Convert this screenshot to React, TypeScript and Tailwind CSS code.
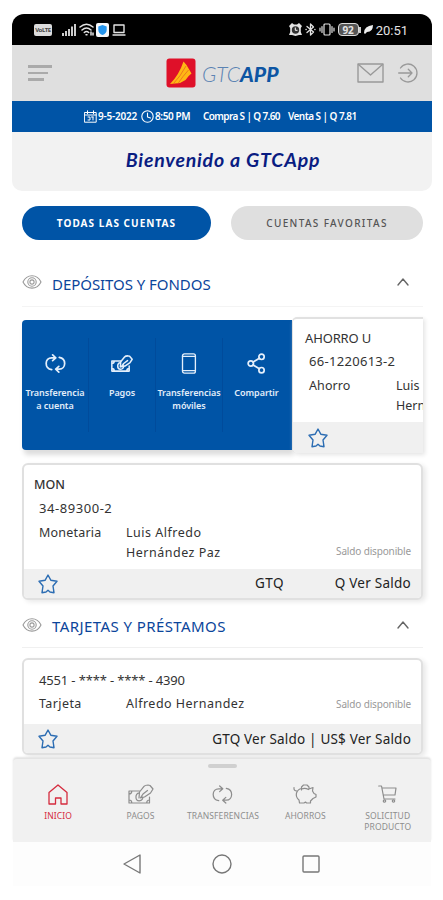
import React from "react";

type IconProps = { className?: string };

const stroke = {
  fill: "none",
  stroke: "currentColor",
  strokeLinecap: "round" as const,
  strokeLinejoin: "round" as const,
};

function Star() {
  return (
    <svg className="h-[20px] w-[20px] text-[#2c6db3]" viewBox="0 0 20 20" {...stroke} strokeWidth="1.4">
      <path d="M10 1 L12.8 6.2 L19 7.3 L15 12 L16 18.7 L12 18 L10 16.2 L8 18 L4 18.7 L5 12 L1 7.3 L7.2 6.2 Z" />
    </svg>
  );
}

function Eye() {
  return (
    <svg className="h-[16px] w-[20px] shrink-0 text-[#9a9a9a]" viewBox="0 0 20 16" {...stroke} strokeWidth="1.1">
      <path d="M1 8 C5 -.4 15 -.4 19 8 C15 16.2 5 16.2 1 8Z" />
      <circle cx="10" cy="8" r="4.2" />
      <circle cx="10" cy="8" r="2.1" />
    </svg>
  );
}

function Transfer({ className }: IconProps) {
  return (
    <svg className={className} viewBox="0 0 22 20" {...stroke}>
      <path d="M7 16.5 C-1 15-.5 4 7 4 H11 M8 1 L11.3 4 L8 7 M15 3.5 C23 5 22 16 15 16 H11.5 M14.5 13 L11.2 16 L14.5 19" />
    </svg>
  );
}

function Money({ className }: IconProps) {
  return (
    <svg className={className} viewBox="0 0 26 20" {...stroke}>
      <path d="M11.5 7 H1 V19 H21.5 V13 M1 10 Q3.8 10 3.8 7 M1 16 Q3.8 16 3.8 19 M18.7 19 Q18.7 16 21.5 16" />
      <path d="M11 9.2 C7 9 6.8 16.8 11.2 16.8 C14 16.8 15.2 14.5 14.7 13" />
      <path d="M11 14 L11.5 8 L16 2.3 Q17 1 20 1 L22 1.5 L25 5 L22.5 9 L16.5 13 L12.5 13.8 L15 10 L19.5 6.5" />
    </svg>
  );
}

function Phone({ className }: IconProps) {
  return (
    <svg className={className} viewBox="0 0 16 22" {...stroke}>
      <rect x="1.2" y="1" width="13.5" height="20" rx="2" />
      <path d="M1.2 3.6 H14.7 M1.2 18.4 H14.7" />
    </svg>
  );
}

function Share({ className }: IconProps) {
  return (
    <svg className={className} viewBox="0 0 20 22" {...stroke}>
      <circle cx="4" cy="11" r="2.8" />
      <circle cx="15.3" cy="4" r="2.8" />
      <circle cx="15.3" cy="18" r="2.8" />
      <path d="M6.5 9.5 L13 5.5 M6.5 12.5 L13 16.5" />
    </svg>
  );
}

function StatusBar() {
  return (
    <div className="flex h-[31px] items-center justify-between rounded-t-[12px] bg-black pl-[22px] pr-[24px] text-[#e3e3e3]">
      <div className="flex items-center">
        <div className="mr-[10px] flex h-[12px] w-[18px] items-center justify-center overflow-hidden rounded-[2px] bg-[#dcdcdc] text-[6px] font-bold leading-none tracking-[-0.4px] text-[#444]">VoLTE</div>
        <svg className="mr-[3px] h-[12px] w-[14px]" viewBox="0 0 14 12" fill="#ccc">
          <path d="M0 9h2v3H0zM3 7h2v5H3zM6 5h2v7H6zM9 2.5h2V12H9zM12 0h2v12h-2z" />
        </svg>
        <svg className="mr-[2px] h-[13px] w-[15px]" viewBox="0 0 15 13" {...stroke} strokeWidth="1.5">
          <path d="M1 4 Q7.5-1.5 14 4 M3 7 Q7.5 3 12 7 M5.3 9.5 Q7.5 7.5 9.7 9.5 M7 11.7h1 M12 9v3M14 10v2" />
        </svg>
        <svg className="mr-[3px] h-[14px] w-[13px]" viewBox="0 0 13 14">
          <rect width="13" height="14" rx="2" fill="#f6f8fa" />
          <path d="M6.5 2 L10.7 3.5 V7 Q10.5 10.5 6.5 12 Q2.5 10.5 2.3 7 V3.5Z" fill="#2495ed" />
        </svg>
        <svg className="h-[12px] w-[14px]" viewBox="0 0 14 12" {...stroke} strokeWidth="1.4">
          <rect x="2" y="1" width="10" height="7.5" /><path d="M1 11 H13" />
        </svg>
      </div>
      <div className="flex items-center">
        <svg className="mr-[3px] h-[13px] w-[13px]" viewBox="0 0 13 13">
          <path d="M0 3 L3 0 L5 1.5 H8 L10 0 L13 3 L11.8 5 V9 L13 12 H10 L6.5 13 L3 12 H0 L1.2 9 V5Z" fill="#e3e3e3" />
          <circle cx="6.5" cy="7" r="3.7" fill="#333" /><path d="M6.3 4.5V7.3H8.5" stroke="#fff" fill="none" />
        </svg>
        <svg className="mr-[3px] h-[13px] w-[11px]" viewBox="0 0 11 13" {...stroke} strokeWidth="1.3">
          <path d="M2 3.5 L8.5 9 L5.5 12 V1 L8.5 4 L2 9.5 M1 6.5h.2M9.8 6.5h.2" />
        </svg>
        <svg className="mr-[3px] h-[13px] w-[16px]" viewBox="0 0 16 13" {...stroke} strokeWidth="1.2">
          <rect x="5" y="1" width="6" height="11" rx="1" /><path d="M3 3.5v6M1 5v3M13 3.5v6M15 5v3" />
        </svg>
        <div className="flex h-[13px] w-[21px] items-center justify-center rounded-[4px] border border-[#ddd] bg-[#555] text-[10px] font-bold leading-none">92</div>
        <div className="mr-[3px] h-[6px] w-[2px] bg-[#ccc]" />
        <svg className="mr-[3px] h-[9px] w-[9px]" viewBox="0 0 9 9"><path d="M0 8 Q0 1 9 0 Q9 7 3 7 L1 9Z" fill="#eee" /></svg>
        <span className="pt-[2px] font-['Roboto'] text-[13px] leading-none">20:51</span>
      </div>
    </div>
  );
}

function Header() {
  return (
    <header className="flex h-[56px] items-center bg-[#dfdfdf] pl-[16px] pr-[14px]">
      <div className="flex w-[24px] flex-col gap-[4px]">
        <div className="h-[2.5px] w-[24px] bg-[#aaa]" />
        <div className="h-[2.5px] w-[20px] bg-[#aaa]" />
        <div className="h-[2.5px] w-[16px] bg-[#aaa]" />
      </div>
      <svg className="ml-[114px] h-[30px] w-[30px]" viewBox="0 0 30 30">
        <rect x=".5" y=".5" width="29" height="29" rx="3" fill="#df1029" />
        <path d="M17.5 3.5 L20.5 7 L25.5 15.5 Q22 18 19.5 22 L14 25 L4 26 Q13 17 17.5 3.5Z" fill="#ffb814" />
        <path d="M20 8 Q14 19 7.5 25.5 M22.5 12 Q17 18 12 25.5" stroke="#e96a20" strokeWidth=".8" fill="none" />
      </svg>
      <div className="ml-[6px] w-[82px] whitespace-nowrap font-['Lato'] text-[21px] italic leading-none text-[#0d55a3]">
        <span className="font-light text-[#5b83b3]">GTC</span><span className="font-black">APP</span>
      </div>
      <div className="flex-1" />
      <svg className="h-[20px] w-[27px] text-[#999]" viewBox="0 0 27 20" {...stroke} strokeWidth="1.4">
        <rect x="1" y="1" width="25" height="18" /><path d="M1.5 1.5 L13.5 12 L25.5 1.5" />
      </svg>
      <svg className="ml-[14px] h-[20px] w-[20px] text-[#999]" viewBox="0 0 20 20" {...stroke} strokeWidth="1.3">
        <path d="M2.5 5 A9 9 0 1 1 2.5 15 M0.7 10 H14 M10.3 6.2 L14 10 L10.3 13.8" />
      </svg>
    </header>
  );
}

function RateBar() {
  return (
    <div className="flex h-[31px] items-center whitespace-nowrap bg-[#0054a6] pl-[72px] text-[10px] font-semibold text-white">
      <svg className="h-[13px] w-[13px] shrink-0" viewBox="0 0 13 13" {...stroke} strokeWidth="1">
        <path d="M.8 2.5h11.4v9.7H.8zM.8 5h11.4M3.5.8v3M9.5.8v3M4 7h2v3H4M9 7v3M7.5 7H9" />
      </svg>
      <span className="ml-[1px] w-[42px] shrink-0 tracking-[-0.2px]">9-5-2022</span>
      <svg className="ml-[1px] h-[13px] w-[13px] shrink-0" viewBox="0 0 13 13" {...stroke} strokeWidth="1.1">
        <circle cx="6.5" cy="6.5" r="5.7" /><path d="M6.5 3v4l3 1" />
      </svg>
      <span className="ml-[1px] w-[48px] shrink-0 tracking-[-0.4px]">8:50 PM</span>
      <span className="w-[85px] shrink-0 tracking-[-0.63px]">Compra S | Q 7.60</span>
      <span className="tracking-[-0.55px]">Venta S | Q 7.81</span>
    </div>
  );
}

function SectionTitle({ children }: { children: React.ReactNode }) {
  return (
    <div className="flex h-full items-center">
      <Eye />
      <h2 className="ml-[10px] flex-1 whitespace-nowrap pt-[4px] leading-none text-[#0b459b]">{children}</h2>
      <svg className="mr-[14px] h-[8px] w-[12px] text-[#666]" viewBox="0 0 12 8" {...stroke} strokeWidth="1.4"><path d="M1 7 L6 1 L11 7" /></svg>
    </div>
  );
}

function Action({ icon, children, last }: { icon: React.ReactNode; children: React.ReactNode; last?: boolean }) {
  return (
    <div className={`flex h-[94px] w-[67px] flex-col items-center ${last ? "" : "border-r border-[#004b9b]"}`}>
      <div className="flex h-[50px] items-center justify-center">{icon}</div>
      <div className="mt-[-2px] whitespace-nowrap text-center text-[9px] font-semibold leading-[13px] tracking-[-0.05px] text-[#e2edf9]">{children}</div>
    </div>
  );
}

function DepositsRow() {
  return (
    <div className="flex h-[136px]">
      <div className="mt-[3px] flex h-[130px] w-[270px] shrink-0 items-center rounded-l-[4px] bg-[#0054a6] text-[#e4effb] shadow-[2px_5px_5px_#ddd]">
        <Action icon={<Transfer className="h-[19px] w-[21px] stroke-[1.8]" />}>Transferencia<br />a cuenta</Action>
        <Action icon={<Money className="h-[17px] w-[22px] stroke-[1.8]" />}>Pagos</Action>
        <Action icon={<Phone className="h-[21px] w-[16px] stroke-[1.4]" />}>Transferencias<br />móviles</Action>
        <Action last icon={<Share className="h-[21px] w-[19px] stroke-[1.8]" />}>Compartir</Action>
      </div>
      <article className="z-10 flex h-[136px] w-[131px] flex-col overflow-hidden rounded-l-[5px] border-t-2 border-l border-[#e1e1e1] bg-white shadow-[2px_2px_4px_#e5e5e5]">
        <div className="h-[103px] whitespace-nowrap pl-[12px] pt-[9px] text-[13px] text-[#333]">
          <div className="h-[23px] leading-[20px] tracking-[-0.15px]">AHORRO U</div>
          <div className="h-[25px] pl-[4px] leading-[20px] tracking-[0.3px]">66-1220613-2</div>
          <div className="flex pl-[4px] text-[12.5px] leading-[20px]">
            <span className="w-[87px] shrink-0 tracking-[0.1px]">Ahorro</span><span>Luis<br />Hernández</span>
          </div>
        </div>
        <div className="flex h-[31px] shrink-0 items-center bg-[#f0f0f0] pl-[15px]"><Star /></div>
      </article>
    </div>
  );
}

function Balance() {
  return <span className="whitespace-nowrap text-[10px] leading-none tracking-[-0.15px] text-[#999]">Saldo disponible</span>;
}

function NavItem({ icon, children, red }: { icon: React.ReactNode; children: React.ReactNode; red?: boolean }) {
  return (
    <div className={`flex w-[82.4px] flex-col items-center ${red ? "text-[#d52b3e]" : "text-[#8d8d8d]"}`}>
      <div className="flex h-[24px] items-center">{icon}</div>
      <div className="mt-[4px] whitespace-nowrap text-center text-[8.5px] leading-[11px] tracking-[0.1px]">{children}</div>
    </div>
  );
}

export default function App() {
  return (
    <div className="h-[900px] w-[443px] overflow-hidden bg-white pl-[12px] pt-[14px] font-['Noto_Sans',sans-serif]">
      <main className="w-[420px]">
        <StatusBar />
        <Header />
        <RateBar />
        <div className="flex h-[59px] items-center justify-center rounded-b-[10px] bg-[#f2f2f2] pb-[3px] pl-[2px] font-['Lato'] text-[19.5px] font-bold italic tracking-[0.8px] text-[#0a1d82]">Bienvenido a GTCApp</div>

        <div className="mt-[15px] flex h-[34px] gap-[20px] pl-[10px]">
          <button className="w-[189px] rounded-full bg-[#0054a6] text-[10px] font-bold tracking-[1.05px] text-white">TODAS LAS CUENTAS</button>
          <button className="w-[192px] rounded-full bg-[#dfdfdf] text-[10px] font-medium tracking-[1.35px] text-[#555]">CUENTAS FAVORITAS</button>
        </div>

        <div className="ml-[10px] w-[401px]">
          <div className="h-[67px] border-b border-[#f4f4f4] pt-[18px] text-[15px] tracking-[-0.05px]"><SectionTitle>DEPÓSITOS Y FONDOS</SectionTitle></div>
          <div className="mt-[10px]"><DepositsRow /></div>

          <article className="mt-[10px] flex h-[137px] flex-col overflow-hidden rounded-[6px] border-2 border-[#e0e0e0] bg-white shadow-[3px_2px_5px_#e9e9e9]">
            <div className="h-[104px] pl-[10px] pt-[10px] text-[#333]">
              <div className="h-[23px] text-[12.5px] font-medium leading-[20px]">MON</div>
              <div className="h-[25px] pl-[5px] text-[13px] leading-[20px] tracking-[0.55px]">34-89300-2</div>
              <div className="flex pl-[5px] text-[12.5px] leading-[20px] tracking-[0.2px]"><span className="w-[87px]">Monetaria</span><span className="flex-1 tracking-[0.5px]">Luis Alfredo<br />Hernández Paz</span><span className="flex items-end pb-[7px] pr-[10px]"><Balance /></span></div>
            </div>
            <div className="flex h-[29px] items-center bg-[#f0f0f0] pl-[14px] pr-[10px] text-[13.5px] tracking-[0.25px] text-[#222]">
              <Star /><span className="ml-[197px] flex-1 tracking-[0.5px]">GTQ</span><span>Q Ver Saldo</span>
            </div>
          </article>

          <div className="h-[48px] border-b border-[#f0f0f0] pt-[2px] text-[15px] tracking-[0.42px]"><SectionTitle>TARJETAS Y PRÉSTAMOS</SectionTitle></div>
          <article className="mt-[10px] flex h-[97px] flex-col overflow-hidden rounded-[6px] border-2 border-[#e0e0e0] bg-white shadow-[3px_2px_5px_#e9e9e9]">
            <div className="h-[64px] pl-[15px] pr-[10px] pt-[10px] text-[#333]">
              <div className="h-[24px] text-[13px] leading-[20px] tracking-[-0.15px]">4551 - **** - **** - 4390</div>
              <div className="flex items-center text-[12.5px] leading-[20px] tracking-[0.4px]"><span className="w-[87px]">Tarjeta</span><span className="flex-1 tracking-[0.48px]">Alfredo Hernandez</span><Balance /></div>
            </div>
            <div className="flex h-[29px] items-center justify-between bg-[#f0f0f0] pl-[14px] pr-[10px] pt-[1px] text-[13.5px] tracking-[0.2px] text-[#222]"><Star /><span>GTQ Ver Saldo | US$ Ver Saldo</span></div>
          </article>
        </div>

        <nav className="ml-[1px] mt-[4px] h-[83px] w-[418px] rounded-t-[4px] bg-[#f1f1f1] pt-[5px] shadow-[0_-2px_2px_#e3e3e3]">
          <div className="mx-auto h-[4px] w-[29px] rounded-full bg-[#d0d0d0]" />
          <div className="mt-[14px] flex pl-[4px]">
            <NavItem red icon={<svg className="h-[21px] w-[20px]" viewBox="0 0 20 21" {...stroke} strokeWidth="1.3"><path d="M1 8.5 L10 1 L19 8.5 V20 H13 V14 H7.5 V20 H1Z" /></svg>}>INICIO</NavItem>
            <NavItem icon={<Money className="h-[20px] w-[26px] stroke-[1.2]" />}>PAGOS</NavItem>
            <NavItem icon={<Transfer className="h-[19px] w-[21px] stroke-[1.3]" />}>TRANSFERENCIAS</NavItem>
            <NavItem icon={<svg className="h-[20px] w-[24px]" viewBox="0 0 24 20" {...stroke} strokeWidth="1.2"><path d="M1 3.5 Q.5 7 4 7 M3.5 9 Q5 5 8.5 4.5 M8.5 6 V3 L10.5 1 H14 L16 3 V5 L20 3.5 L19.5 7 L21 9.5 L23 10.5 V13 L20 14.5 L17.5 17 V19 H13.5 L12.5 18 L11 19 H6.5 L6 16 Q2.5 13 3.5 9 M8.5 5 Q12 3.5 15.5 5.5" /></svg>}>AHORROS</NavItem>
            <NavItem icon={<svg className="h-[18px] w-[19px]" viewBox="0 0 19 18" {...stroke} strokeWidth="1.2"><path d="M0.7 1 H3.5 L6 14 H17 M4 3 H18 L17 10 H5.5" /><circle cx="6.5" cy="16" r="1.2" /><circle cx="15.5" cy="16" r="1.2" /></svg>}>SOLICITUD<br />PRODUCTO</NavItem>
          </div>
        </nav>
        <div className="ml-[1px] flex h-[44px] w-[418px] items-center bg-[#fdfdfd] pl-[110px] text-[#777]">
          <svg className="h-[20px] w-[18px]" viewBox="0 0 18 20" {...stroke} strokeWidth="1.4"><path d="M17 1 V19 L1 10Z" /></svg>
          <svg className="ml-[71px] h-[20px] w-[20px]" viewBox="0 0 20 20" {...stroke} strokeWidth="1.4"><circle cx="10" cy="10" r="9" /></svg>
          <svg className="ml-[70px] h-[18px] w-[18px]" viewBox="0 0 18 18" {...stroke} strokeWidth="1.4"><rect x="1" y="1" width="16" height="16" rx="1" /></svg>
        </div>
      </main>
    </div>
  );
}
